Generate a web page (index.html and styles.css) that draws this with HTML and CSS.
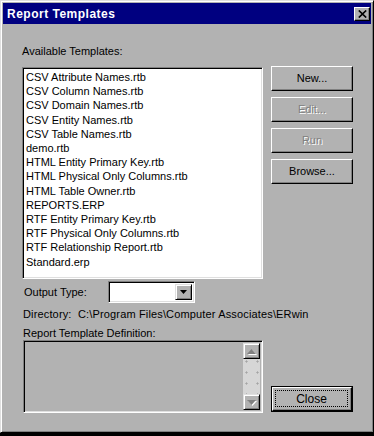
FILE: index.html
```html
<!DOCTYPE html>
<html lang="en">
<head>
  <meta charset="UTF-8">
  <title>Report Templates</title>
  <link rel="stylesheet" href="styles.css">
</head>
<body>
  <div class="window">
    <div class="titlebar">
      <span class="title">Report Templates</span>
      <span class="title-close">
        <svg width="9" height="8" viewBox="0 0 9 8"><path d="M0.8 0.5 L8.2 7.5 M8.2 0.5 L0.8 7.5" stroke="#000" stroke-width="1.7" fill="none"/></svg>
      </span>
    </div>

    <div class="content">
      <div class="label">Available Templates:</div>

      <div class="row-top">
        <ul class="listbox">
          <li>CSV Attribute Names.rtb</li>
          <li>CSV Column Names.rtb</li>
          <li>CSV Domain Names.rtb</li>
          <li>CSV Entity Names.rtb</li>
          <li>CSV Table Names.rtb</li>
          <li>demo.rtb</li>
          <li>HTML Entity Primary Key.rtb</li>
          <li>HTML Physical Only Columns.rtb</li>
          <li>HTML Table Owner.rtb</li>
          <li>REPORTS.ERP</li>
          <li>RTF Entity Primary Key.rtb</li>
          <li>RTF Physical Only Columns.rtb</li>
          <li>RTF Relationship Report.rtb</li>
          <li>Standard.erp</li>
        </ul>
        <div class="btn-col">
          <div class="btn">New...</div>
          <div class="btn disabled">Edit...</div>
          <div class="btn disabled">Run</div>
          <div class="btn">Browse...</div>
        </div>
      </div>

      <div class="output-row">
        <span class="output-label">Output Type:</span>
        <div class="combo">
          <div class="combo-field"></div>
          <div class="combo-btn">
            <svg width="7" height="4" viewBox="0 0 7 4"><path d="M0 0 H7 L3.5 4 Z" fill="#000"/></svg>
          </div>
        </div>
      </div>

      <div class="dir">Directory:&nbsp; C:\Program Files\Computer Associates\ERwin</div>
      <div class="def-label">Report Template Definition:</div>

      <div class="row-bottom">
        <div class="defbox">
          <div class="def-text"></div>
          <div class="scrollbar">
            <div class="sb-btn">
              <svg width="9" height="5" viewBox="0 0 9 5"><path d="M0 5 H9 L4.5 0 Z" fill="#808080"/></svg>
            </div>
            <div class="sb-track"></div>
            <div class="sb-btn">
              <svg width="9" height="5" viewBox="0 0 9 5"><path d="M0 0 H9 L4.5 5 Z" fill="#808080"/></svg>
            </div>
          </div>
        </div>
        <div class="btn-default">
          <div class="face"><span class="focus">Close</span></div>
        </div>
      </div>
    </div>
  </div>
</body>
</html>
```

FILE: styles.css
```css
:root {
  --face: #b2b2b2;
  --light: #dfdfdf;
  --shadow: #808080;
  --navy: #000080;
}
* { box-sizing: border-box; margin: 0; padding: 0 }
body {
  width: 374px; height: 436px;
  background: #000;
  overflow: hidden;
  font-family: "Liberation Sans", Arial, sans-serif;
  font-size: 11px;
  color: #000;
}
.window {
  width: 374px; height: 433px;
  background: var(--face);
  border: 1px solid;
  border-color: var(--light) #000 #000 var(--light);
  box-shadow: inset 1px 1px #fff, inset -1px -1px var(--shadow);
  padding: 2px;
  display: flex; flex-direction: column;
}

/* title bar */
.titlebar {
  height: 21px;
  background: var(--navy);
  display: flex; align-items: center; justify-content: space-between;
  padding: 0 1px 0 4px;
}
.title {
  color: #fff;
  font-weight: bold;
  font-size: 12px;
  letter-spacing: .5px;
}
.title-close {
  width: 16px; height: 14px;
  background: var(--face);
  border: 1px solid;
  border-color: #fff #000 #000 #fff;
  box-shadow: inset -1px -1px var(--shadow);
  display: flex; align-items: center; justify-content: center;
}

.content {
  padding: 21px 0 0 19px;
}
.label, .dir, .def-label {
  line-height: 13px;
  white-space: nowrap;
}
.label { margin-bottom: 8px }

/* sunken frame shared by list, combo, definition box */
.listbox, .combo, .defbox {
  border: 1px solid;
  border-color: var(--shadow) #fff #fff var(--shadow);
  box-shadow: inset 1px 1px #000, inset -1px -1px var(--light);
}

.row-top {
  display: flex; gap: 8px;
  align-items: flex-start;
}
.listbox {
  list-style: none;
  width: 241px; height: 212px;
  margin-top: 1px;
  background: #fff;
  padding: 2px 3px;
  line-height: 14.2px;
  white-space: nowrap;
  overflow: hidden;
}

.btn-col {
  display: flex; flex-direction: column; gap: 6px;
}
.btn {
  width: 82px; height: 25px;
  border: 1px solid;
  border-color: #fff #000 #000 #fff;
  box-shadow: inset -1px -1px var(--shadow);
  display: flex; align-items: center; justify-content: center;
  padding-bottom: 1px;
}
.btn.disabled {
  color: var(--shadow);
  text-shadow: 1px 1px #fff;
}

/* output type combo */
.output-row {
  display: flex; align-items: center;
  margin-top: 2px;
  padding-left: 2px;
}
.output-label { width: 84px }
.combo {
  width: 87px; height: 22px;
  background: #fff;
  padding: 2px;
  display: flex;
}
.combo-field { flex: 1 }
.combo-btn {
  width: 17px;
  background: var(--face);
  border: 1px solid;
  border-color: var(--light) #000 #000 var(--light);
  box-shadow: inset 1px 1px #fff, inset -1px -1px var(--shadow);
  display: flex; align-items: center; justify-content: center;
}

.dir { margin-top: 5px; padding-left: 1px; letter-spacing: .15px }
.def-label { margin-top: 6px; padding-left: 1px }

/* definition box + close */
.row-bottom {
  display: flex; gap: 8px;
  align-items: flex-end;
  padding-left: 1px;
}
.defbox {
  width: 240px; height: 73px;
  padding: 2px;
  display: flex;
}
.def-text { flex: 1 }
.scrollbar {
  width: 17px;
  display: flex; flex-direction: column;
}
.sb-btn {
  height: 16px;
  background: var(--face);
  border: 1px solid;
  border-color: var(--light) #000 #000 var(--light);
  box-shadow: inset 1px 1px #fff, inset -1px -1px var(--shadow);
  display: flex; align-items: center; justify-content: center;
}
.sb-btn svg { filter: drop-shadow(1px 1px 0 #fff) }
.sb-track {
  flex: 1;
  background-color: #d6d6d6;
  background-image: radial-gradient(circle, #a4a4a4 .9px, transparent 1.2px);
  background-size: 11px 11px;
  background-position: -2px -3px;
}

.btn-default {
  width: 82px; height: 26px;
  margin-bottom: 1px;
  border: 1px solid #000;
}
.btn-default .face {
  height: 100%;
  border: 1px solid;
  border-color: #fff #000 #000 #fff;
  box-shadow: inset -1px -1px var(--shadow);
  padding: 2px 3px 3px 2px;
}
.focus {
  height: 100%;
  border: 1px dotted #000;
  display: flex; align-items: center; justify-content: center;
  font-size: 12px;
}
```
